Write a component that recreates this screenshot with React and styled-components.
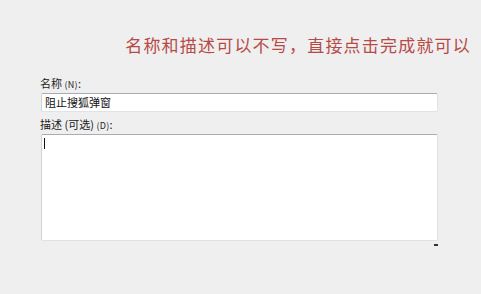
import React from "react";
import styled, { createGlobalStyle } from "styled-components";

const Global = createGlobalStyle`
  html, body { margin: 0; padding: 0; background: #efefef; }
  body { font-family: "Noto Sans CJK SC", "Noto Sans", sans-serif; }
`;

const Page = styled.div`
  width: 481px;
  height: 294px;
  background: #efefef;
  display: flex;
  flex-direction: column;
  box-sizing: border-box;
  padding-top: 35px;
`;

const Notice = styled.div`
  align-self: flex-end;
  margin-right: 10px;
  font-size: 17px;
  line-height: 20px;
  letter-spacing: 1.2px;
  color: #b64a47;
  white-space: nowrap;
`;

const Form = styled.div`
  margin-top: 21px;
  margin-left: 40px;
  width: 398px;
  display: flex;
  flex-direction: column;
`;

const Label = styled.div`
  font-size: 11px;
  line-height: 14px;
  color: #1b1b1b;
  margin-top: ${(p) => p.$gap || 0}px;
  margin-bottom: 1px;
  white-space: nowrap;
`;

const Key = styled.span`
  font-size: 9px;
  letter-spacing: 0.3px;
`;

const Field = styled.div`
  box-sizing: border-box;
  height: ${(p) => p.$h}px;
  margin-left: 1px;
  background: #fff;
  border: 1px solid #dde3ea;
  border-top-color: #a9adb3;
  border-left-color: #cfd4da;
  border-radius: 2px;
  padding: ${(p) => p.$pad};
  font-size: 11px;
  line-height: 15px;
  color: #111;
`;

const Caret = styled.span`
  display: block;
  width: 1px;
  height: 11px;
  background: #111;
`;

const Grip = styled.div`
  align-self: flex-end;
  width: 4px;
  height: 2px;
  margin-top: 3px;
  margin-right: 0;
  background: #333;
`;

export default function App() {
  return (
    <>
      <Global />
      <Page>
        <Notice>名称和描述可以不写，直接点击完成就可以</Notice>
        <Form>
          <Label>
            名称 <Key>(N)</Key>:
          </Label>
          <Field $h={19} $pad="1px 3px">阻止搜狐弹窗</Field>
          <Label $gap={5}>
            描述 (可选) <Key>(D)</Key>:
          </Label>
          <Field $h={107} $pad="3px 2px">
            <Caret />
          </Field>
          <Grip />
        </Form>
      </Page>
    </>
  );
}
